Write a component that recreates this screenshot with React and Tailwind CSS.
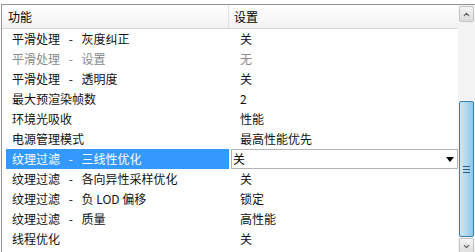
import { ChevronUp, ChevronDown } from 'lucide-react'

const rows = [
  { name: '平滑处理 \u2002-\u2002 灰度纠正', value: '关' },
  { name: '平滑处理 \u2002-\u2002 设置', value: '无', muted: true },
  { name: '平滑处理 \u2002-\u2002 透明度', value: '关' },
  { name: '最大预渲染帧数', value: '2' },
  { name: '环境光吸收', value: '性能' },
  { name: '电源管理模式', value: '最高性能优先' },
  { name: '纹理过滤 \u2002-\u2002 三线性优化', value: '关', selected: true },
  { name: '纹理过滤 \u2002-\u2002 各向异性采样优化', value: '关' },
  { name: '纹理过滤 \u2002-\u2002 负 LOD 偏移', value: '锁定' },
  { name: '纹理过滤 \u2002-\u2002 质量', value: '高性能' },
  { name: '线程优化', value: '关' },
]

function Row({ row }) {
  if (row.selected) {
    return (
      <div className="flex h-[20px] items-center">
        <div className="ml-[4px] flex h-[20px] w-[223px] items-center whitespace-pre bg-[#3399ff] pl-[6px] text-white">
          {row.name}
        </div>
        <div className="ml-[2px] flex h-[20px] flex-1 items-center justify-between border border-[#b4b4b4] bg-white pl-[1px] pr-[3px]">
          <span>{row.value}</span>
          <svg width="8" height="5" viewBox="0 0 8 5">
            <path d="M0 0 H8 L4 5 Z" fill="#000" />
          </svg>
        </div>
      </div>
    )
  }
  return (
    <div className={`flex h-[20px] items-center ${row.muted ? 'text-[#8a8a8a]' : 'text-[#111]'}`}>
      <div className="w-[227px] whitespace-pre pl-[10px]">{row.name}</div>
      <div className="pl-[11px]">{row.value}</div>
    </div>
  )
}

export default function App() {
  return (
    <div
      className="h-[252px] w-[475px] overflow-hidden bg-white pt-[4px] pl-[1px] text-[12px] leading-none"
      style={{ fontFamily: '"Noto Sans CJK SC", "Noto Sans", sans-serif' }}
    >
      <div className="flex h-[260px] border-t border-l border-[#8e9299]">
        {/* list */}
        <div className="flex-1">
          <div className="flex h-[24px] items-center border-b border-[#d5d5d5] bg-gradient-to-b from-white to-[#f2f2f2]">
            <div className="flex h-full w-[227px] items-center border-r border-[#e2e2e2] pl-[6px]">功能</div>
            <div className="pl-[5px]">设置</div>
          </div>
          {rows.map((r) => (
            <Row key={r.name} row={r} />
          ))}
        </div>

        {/* scrollbar */}
        <div className="flex w-[17px] flex-col bg-[#f3f3f3]">
          <div className="mx-[1px] mt-[1px] flex h-[16px] items-center justify-center rounded-[2px] border border-[#c5c5c5] bg-gradient-to-b from-[#f5f5f5] to-[#dcdcdc]">
            <ChevronUp size={9} strokeWidth={3} className="text-[#555]" />
          </div>
          <div className="h-[79px]" />
          <div className="mx-[1px] flex h-[136px] flex-col items-center justify-center rounded-[2px] border border-[#3c7fb1] bg-gradient-to-r from-[#cde7f7] via-[#b0d8f2] to-[#8fc6ea]">
            <div className="flex flex-col gap-[2px]">
              <div className="h-[1px] w-[7px] bg-[#2a5f86]" />
              <div className="h-[1px] w-[7px] bg-[#2a5f86]" />
              <div className="h-[1px] w-[7px] bg-[#2a5f86]" />
            </div>
          </div>
          <div className="mx-[1px] mt-[1px] flex h-[16px] items-center justify-center rounded-[2px] border border-[#c5c5c5] bg-gradient-to-b from-[#f5f5f5] to-[#dcdcdc]">
            <ChevronDown size={9} strokeWidth={3} className="text-[#555]" />
          </div>
        </div>
      </div>
    </div>
  )
}
